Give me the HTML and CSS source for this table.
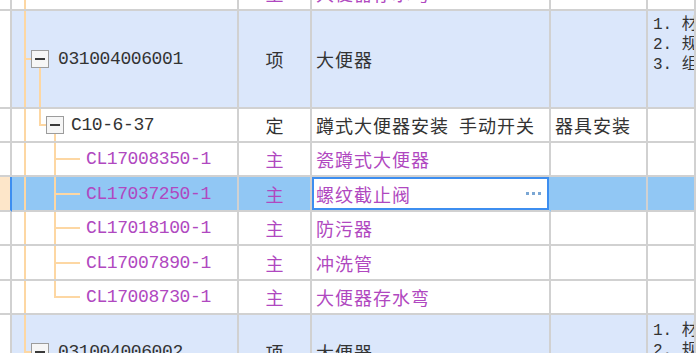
FILE: index.html
```html
<!DOCTYPE html>
<html lang="zh-CN">
<head>
<meta charset="utf-8">
<title>清单定额</title>
<link rel="stylesheet" href="styles.css">
</head>
<body>
<div class="sheet">
  <div class="row h35">
    <div class="c hd"></div>
    <div class="c tree t-main"></div>
    <div class="c type sub">主</div>
    <div class="c name sub">大便器存水弯</div>
    <div class="c"></div>
    <div class="c"></div>
  </div>
  <div class="row item h98">
    <div class="c hd"></div>
    <div class="c tree t-item"><span class="tog"></span><span class="code gap9">031004006001</span></div>
    <div class="c type">项</div>
    <div class="c name">大便器</div>
    <div class="c"></div>
    <div class="c desc"><div>1. 材质、类型</div><div>2. 规格、类型</div><div>3. 组装形式</div></div>
  </div>
  <div class="row h34">
    <div class="c hd"></div>
    <div class="c tree t-def"><span class="tog"></span><span class="code gap7">C10-6-37</span></div>
    <div class="c type">定</div>
    <div class="c name">蹲式大便器安装&#8194;手动开关</div>
    <div class="c name">器具安装</div>
    <div class="c"></div>
  </div>
  <div class="row h34">
    <div class="c hd"></div>
    <div class="c tree t-cl"><span class="code sub">CL17008350-1</span></div>
    <div class="c type sub">主</div>
    <div class="c name sub">瓷蹲式大便器</div>
    <div class="c"></div>
    <div class="c"></div>
  </div>
  <div class="row sel h35">
    <div class="c hd"></div>
    <div class="c tree t-cl"><span class="code sub">CL17037250-1</span></div>
    <div class="c type sub">主</div>
    <div class="c edit"><div class="editbox"><span class="name-in sub">螺纹截止阀</span><span class="dots"><i></i><i></i><i></i></span></div></div>
    <div class="c"></div>
    <div class="c"></div>
  </div>
  <div class="row h34">
    <div class="c hd"></div>
    <div class="c tree t-cl"><span class="code sub">CL17018100-1</span></div>
    <div class="c type sub">主</div>
    <div class="c name sub">防污器</div>
    <div class="c"></div>
    <div class="c"></div>
  </div>
  <div class="row h35">
    <div class="c hd"></div>
    <div class="c tree t-cl"><span class="code sub">CL17007890-1</span></div>
    <div class="c type sub">主</div>
    <div class="c name sub">冲洗管</div>
    <div class="c"></div>
    <div class="c"></div>
  </div>
  <div class="row h34">
    <div class="c hd"></div>
    <div class="c tree t-last"><span class="code sub">CL17008730-1</span></div>
    <div class="c type sub">主</div>
    <div class="c name sub">大便器存水弯</div>
    <div class="c"></div>
    <div class="c"></div>
  </div>
  <div class="row item h76">
    <div class="c hd"></div>
    <div class="c tree t-item"><span class="tog"></span><span class="code gap9">031004006002</span></div>
    <div class="c type">项</div>
    <div class="c name">大便器</div>
    <div class="c"></div>
    <div class="c desc desc2"><div>1. 材质、类型</div><div>2. 规格、类型</div><div>3. 组装形式</div></div>
  </div>
</div>
</body>
</html>
```

FILE: styles.css
```css
* { box-sizing: border-box; }

html, body {
  margin: 0;
  background: #fff;
  overflow: hidden;
}

body {
  width: 696px;
  height: 353px;
  font-family: "Liberation Mono", "Noto Sans CJK SC", monospace;
  font-size: 17px;
  color: #333;
  --line: #fdd7a3;
}

.sheet {
  margin-top: -24px;
}

.row {
  display: grid;
  grid-template-columns: 12px 227px 73px 239px 97px 1fr;
}

.h34 { height: 34px; }
.h35 { height: 35px; }
.h98 { height: 98px; }
.h76 { height: 76px; }

.c {
  display: flex;
  align-items: center;
  min-width: 0;
  overflow: hidden;
  white-space: nowrap;
  border-right: 2px solid #d1d1d1;
  border-bottom: 2px solid #d1d1d1;
  background-color: #fff;
}

.item .c { background-color: #dbe7fb; }
.item .hd { background-color: #fff; }

.sel .c { background-color: #91c7f4; }
.sel .hd {
  background-color: #fde6c9;
  border-right-color: #3d8ef0;
}

.type {
  justify-content: center;
  font-family: "Noto Sans CJK SC", sans-serif;
  font-size: 18px;
}

.name {
  padding-left: 4px;
  font-family: "Noto Sans CJK SC", sans-serif;
  font-size: 18px;
  letter-spacing: 1px;
}

.sub { color: #b048c0; }

.code {
  font-size: 18px;
  letter-spacing: -0.4px;
  line-height: 20px;
}
.gap9 { margin-left: 9px; }
.gap7 { margin-left: 7px; }

/* tree guide lines */
.tree {
  background-repeat: no-repeat;
}

.t-main {
  background-image: linear-gradient(var(--line), var(--line));
  background-position: 12px 0;
  background-size: 2px 100%;
}

.t-item {
  padding-left: 19px;
  background-image:
    linear-gradient(var(--line), var(--line)),
    linear-gradient(var(--line), var(--line)),
    linear-gradient(var(--line), var(--line));
  background-position: 12px 0, 12px 50%, 27px 100%;
  background-size: 2px 100%, 8px 2px, 2px 50%;
}

.t-def {
  padding-left: 34px;
  background-image:
    linear-gradient(var(--line), var(--line)),
    linear-gradient(var(--line), var(--line)),
    linear-gradient(var(--line), var(--line)),
    linear-gradient(var(--line), var(--line));
  background-position: 12px 0, 27px 0, 27px 50%, 42px 100%;
  background-size: 2px 100%, 2px 50%, 8px 2px, 2px 50%;
}

.t-cl {
  padding-left: 74px;
  background-image:
    linear-gradient(var(--line), var(--line)),
    linear-gradient(var(--line), var(--line)),
    linear-gradient(var(--line), var(--line));
  background-position: 12px 0, 42px 0, 42px 50%;
  background-size: 2px 100%, 2px 100%, 26px 2px;
}

.t-last {
  padding-left: 74px;
  background-image:
    linear-gradient(var(--line), var(--line)),
    linear-gradient(var(--line), var(--line)),
    linear-gradient(var(--line), var(--line));
  background-position: 12px 0, 42px 0, 42px 50%;
  background-size: 2px 100%, 2px calc(50% + 1px), 26px 2px;
}

.tog {
  flex: none;
  width: 18px;
  height: 18px;
  border: 1px solid #9c9c9c;
  background: #f6f6f6;
  display: flex;
  align-items: center;
  justify-content: center;
}

.tog::before {
  content: "";
  width: 10px;
  height: 2px;
  background: #3a3a3a;
}

/* editor cell */
.sel .edit {
  align-items: stretch;
  border-right-color: #91c7f4;
  background-color: #91c7f4;
}

.editbox {
  flex: 1;
  display: flex;
  align-items: center;
  border: 2px solid #3d8ef0;
  background: #fff;
  padding-left: 2px;
}

.name-in {
  font-family: "Noto Sans CJK SC", sans-serif;
  font-size: 18px;
  letter-spacing: 1px;
}

.dots {
  margin-left: auto;
  margin-right: 6px;
  display: flex;
  gap: 3px;
}

.dots i {
  width: 3px;
  height: 3px;
  background: #7ba7d4;
}

.desc {
  flex-direction: column;
  align-items: flex-start;
  justify-content: flex-start;
  padding: 4px 0 0 5px;
  font-size: 16px;
  line-height: 20px;
}

.desc2 { padding-top: 6px; }
```
